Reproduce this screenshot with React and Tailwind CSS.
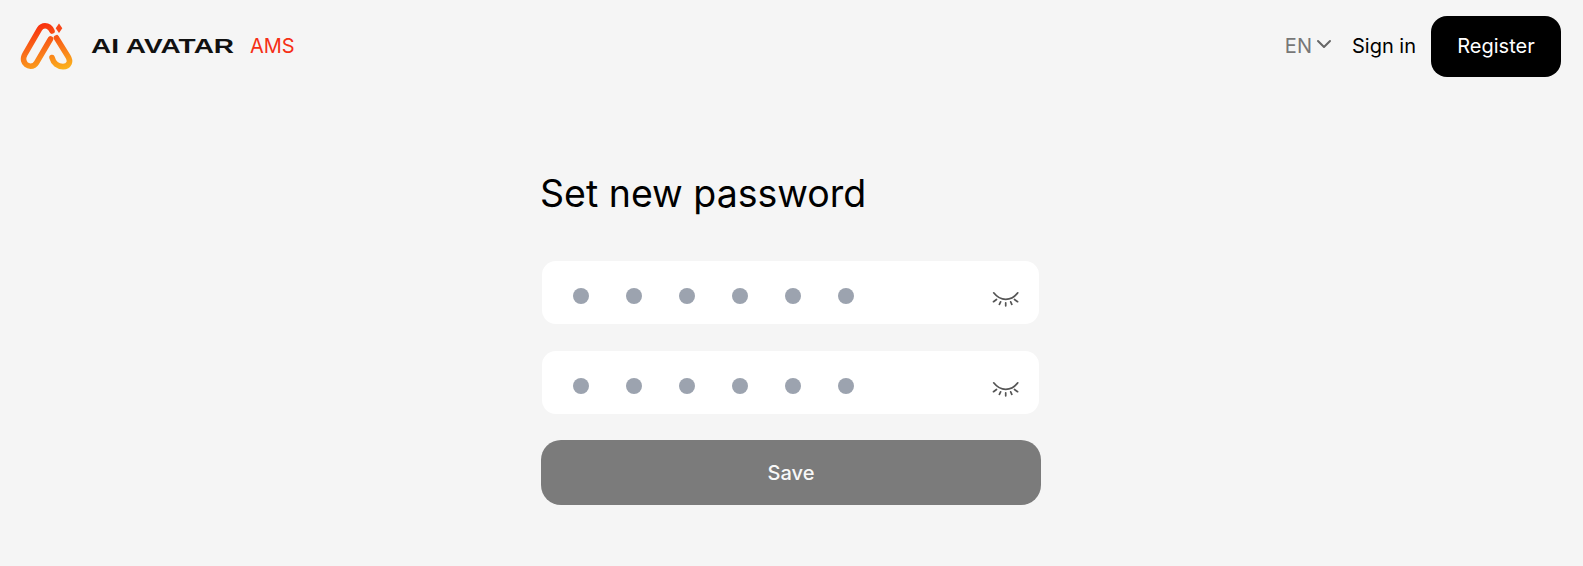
import React from 'react';
import { ChevronDown } from 'lucide-react';

const Logo = () => (
  <svg width="54" height="50" viewBox="0 0 54 50" fill="none">
    <defs>
      <linearGradient id="logoGrad" x1="30" y1="2" x2="42" y2="48" gradientUnits="userSpaceOnUse">
        <stop offset="0" stopColor="#f8330f" />
        <stop offset="0.55" stopColor="#f9751a" />
        <stop offset="1" stopColor="#fbb01c" />
      </linearGradient>
    </defs>
    <path
      d="M32 10C30.500 6.500 28 4.700 25 4.700C22.500 4.700 20.800 5.900 19.500 8L5 33C3.600 35.600 3.200 37.500 3.700 39.500C4.500 43 7.500 45.200 10.500 45.200C13 45.200 15.200 44 16.600 41.600L30.500 18"
      stroke="url(#logoGrad)"
      strokeWidth="5.600"
      strokeLinecap="round"
    />
    <path
      d="M36.500 17L48 35.500C49.700 38.300 50 40 49.200 42C48 44.600 45.500 45.600 43 45.600C38 45.600 33.500 42.500 32 36.500"
      stroke="url(#logoGrad)"
      strokeWidth="5.600"
      strokeLinecap="round"
    />
    <path d="M39 2.500L42.300 7.200L39 12L35.700 7.200Z" fill="#f8471a" />
    <path d="M37 13.500L39 16.300L37 19L35 16.300Z" fill="#f8571a" />
  </svg>
);

const EyeClosed = () => (
  <svg width="26" height="15" viewBox="0 0 26 15" fill="none" stroke="#555" strokeLinecap="round" strokeWidth="1.700" className="overflow-visible">
    <path d="M0.700 0.800C4 5 8 7.300 12.700 7.300C17.400 7.300 21.500 5 24.800 0.800" />
    <path d="M0.500 9.700L3.500 7.500M6.400 12.300L7.600 9.800M12.700 13.800V10.800M18.800 12.300L17.700 9.800M24.600 9.700L21.500 7.500" />
  </svg>
);

const PasswordField = () => (
  <div className="h-[63px] w-[497px] bg-white rounded-[14px] flex items-center justify-between pl-[31px] pr-[20px]">
    <div className="flex gap-[37.100px] mt-[6px]">
      {[0, 1, 2, 3, 4, 5].map((i) => (
        <span key={i} className="block w-4 h-4 rounded-full bg-[#9ca3af]" />
      ))}
    </div>
    <span className="mt-[14px] block"><EyeClosed /></span>
  </div>
);

export default function App() {
  return (
    <div className="min-h-[566px] bg-[#f5f5f5] font-['Inter',sans-serif]">
      <header className="h-[92px] flex items-center justify-between pl-[20px] pr-[22px]">
        <div className="flex items-center">
          <Logo />
          <span className="ml-[17px] w-[142px] text-[20px] leading-none font-semibold text-[#111] origin-left scale-x-[1.4] whitespace-nowrap font-['Liberation_Sans',sans-serif]">AI AVATAR</span>
          <span className="ml-[17px] text-[20px] text-[#f52f16]">AMS</span>
        </div>
        <div className="flex items-center">
          <button className="flex items-center text-[20px] text-[#777]">
            EN
            <ChevronDown className="w-[24px] h-[24px] -mt-1 text-[#666]" strokeWidth={2} />
          </button>
          <a className="ml-[16px] text-[20px] text-black">Sign in</a>
          <button className="ml-[15px] w-[130px] h-[61px] rounded-[16px] bg-black text-white text-[20px]">Register</button>
        </div>
      </header>
      <main className="w-[500px] ml-[541px] pt-[80px]">
        <h1 className="-ml-[1px] text-[37.500px] leading-[44px] text-black">Set new password</h1>
        <div className="mt-[45px] ml-[1px] flex flex-col gap-[27px]">
          <PasswordField />
          <PasswordField />
        </div>
        <button className="mt-[26px] w-[500px] h-[65px] rounded-[20px] bg-[#7b7b7b] text-[#f8f8f8] text-[20px] font-medium">Save</button>
      </main>
    </div>
  );
}
